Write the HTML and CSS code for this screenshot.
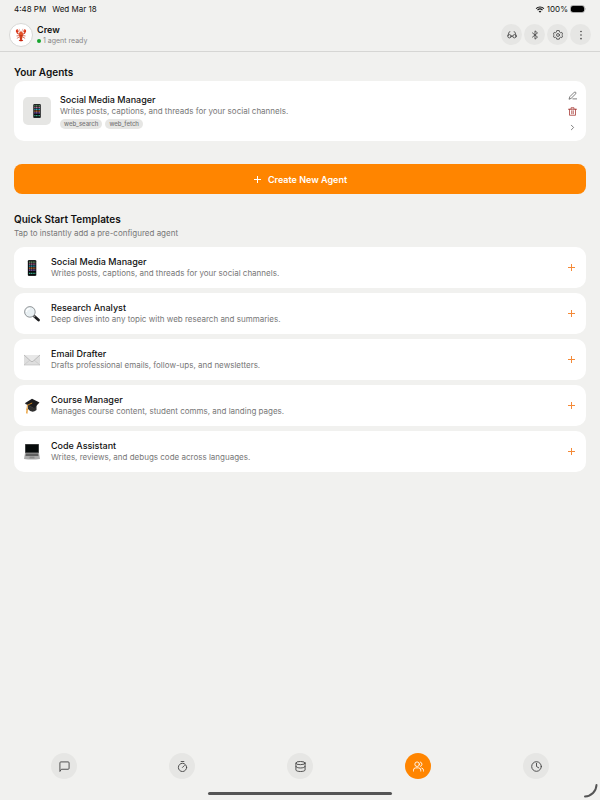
FILE: index.html
```html
<!DOCTYPE html>
<html lang="en">
<head>
<meta charset="utf-8">
<meta name="viewport" content="width=device-width, initial-scale=1">
<title>Crew</title>
<link rel="stylesheet" href="styles.css">
</head>
<body>
<svg class="defs" aria-hidden="true">
  <symbol id="plus" viewBox="0 0 9 9"><path d="M4.5 1v7M1 4.5h7"/></symbol>
  <symbol id="phone" viewBox="0 0 16 16">
    <rect x="3.7" y="0" width="8.8" height="16" rx="1.2" fill="#777"/>
    <rect x="4" y=".2" width="8" height="15.6" rx="1" fill="#080b0d"/>
    <g stroke-width="1.3" stroke-dasharray="1.3 .5">
      <path d="M4.9 2.2h6.5" stroke="#74a474"/><path d="M4.9 4.2h6.5" stroke="#bd6d9b"/>
      <path d="M4.9 6.2h6.5" stroke="#2ca5c0"/><path d="M4.9 8.2h6.5" stroke="#d47b38"/>
      <path d="M4.9 10.2h6.5" stroke="#8e60c4"/><path d="M4.9 13.3h6.5" stroke="#38a685"/>
    </g>
  </symbol>
</svg>
<div class="app">
  <div class="status">
    <div class="status-group"><span>4:48 PM</span><span>Wed Mar 18</span></div>
    <div class="status-end">
      <svg class="wifi" viewBox="0 0 12 9"><path d="M1 3.3a7.3 7.3 0 0 1 10 0M2.8 5.2a4.6 4.6 0 0 1 6.4 0" fill="none" stroke="#111" stroke-width="1.5"/><path d="M6 8.8 4.2 6.9a2.6 2.6 0 0 1 3.6 0z" fill="#111"/></svg>
      <span>100%</span>
      <svg class="battery" viewBox="0 0 16 8"><rect x=".5" y=".5" width="14" height="7" rx="2.4" fill="none" stroke="#aaa"/><rect x="1" y="1" width="13" height="6" rx="1.8" fill="#000"/><path d="M15.3 2.8q1 1.2 0 2.4z" fill="#999"/></svg>
    </div>
  </div>
  <header class="header">
    <div class="avatar">
      <svg viewBox="0 0 24 24"><g fill="none" stroke="#c92d13" stroke-width="1.7" stroke-linecap="round"><path d="M9.5 11 5.4 9V6M14.5 11l4.1-2V6"/><path d="m9 13-4 .5M15 13l4 .5M9 15.5l-3.5 2M15 15.5l3.5 2" stroke-width="1.1"/><path d="M10.7 7 9 2M13.3 7 15 2" stroke-width=".6"/></g><path d="M6.6 1.5C3 2.3 2 5 4.4 7.7L7 7.9C8.5 5.5 8 4 6.7 3.4L6 5.5zM17.4 1.5C21 2.3 22 5 19.6 7.7L17 7.9C15.5 5.5 16 4 17.3 3.4L18 5.5z" fill="#dc3517"/><path d="M12 6c3 0 4 3 3.3 6.500L13.8 19h-3.600l-1.500-6.500C8 9 9 6 12 6z" fill="#e5532a"/><path d="M9.5 13h5M9.9 15.3h4.200M10.3 17.500h3.400" stroke="#a6210c"/><path d="m12 18 4 4-2.700.8h-2.600L8 22z" fill="#c9250e"/></svg>
    </div>
    <div class="identity">
      <h1>Crew</h1>
      <p class="ready"><span class="dot"></span>1 agent ready</p>
    </div>
    <div class="actions">
      <button class="round" aria-label="Preview"><svg class="line" viewBox="0 0 24 24"><circle cx="6" cy="15" r="4"/><circle cx="18" cy="15" r="4"/><path d="M10 15q2-3 4 0M2 14l3-9q.5-1 2-1M22 14l-3-9q-.5-1-2-1"/></svg></button>
      <button class="round" aria-label="Bluetooth"><svg class="line" viewBox="0 0 24 24"><path d="m6 7 12 10-6 5V2l6 5L6 17"/></svg></button>
      <button class="round" aria-label="Settings"><svg class="line" viewBox="0 0 24 24"><path d="m9 2-.7 3-2.5 1.500L3 5.600.8 10 3 12 .8 14 3 18.400l2.800-.9L8.300 19 9 22h6l.7-3 2.500-1.500 2.800.9 2.200-4.400-2.200-2 2.200-2L21 5.600l-2.800.9L15.700 5 15 2z"/><circle cx="12" cy="12" r="3.5"/></svg></button>
      <button class="round" aria-label="More"><svg class="solid" viewBox="0 0 24 24"><circle cx="12" cy="3.5" r="2"/><circle cx="12" cy="12" r="2"/><circle cx="12" cy="20.5" r="2"/></svg></button>
    </div>
  </header>
  <main class="content">
    <section>
      <h2>Your Agents</h2>
      <article class="agent">
        <div class="tile"><svg class="phone-small"><use href="#phone"/></svg></div>
        <div class="copy">
          <h3>Social Media Manager</h3>
          <p>Writes posts, captions, and threads for your social channels.</p>
          <div class="tags"><span>web_search</span><span>web_fetch</span></div>
        </div>
        <div class="tools">
          <button aria-label="Edit"><svg class="line" viewBox="0 0 24 24"><path d="m3 21 2-6L17 3q2-1 3.500.5T21 7L9 19zM13 21h10"/></svg></button>
          <button class="danger" aria-label="Delete"><svg class="line" viewBox="0 0 24 24"><path d="M1 6h22M4 6v16h16V6M8 6V2h8v4M10 10v8M14 10v8"/></svg></button>
          <button aria-label="Open"><svg class="line" viewBox="0 0 24 24"><path d="m9 6 6 6-6 6"/></svg></button>
        </div>
      </article>
    </section>
    <button class="create"><svg class="plus"><use href="#plus"/></svg>Create New Agent</button>
    <section>
      <h2>Quick Start Templates</h2>
      <p class="hint">Tap to instantly add a pre-configured agent</p>
      <div class="templates">
        <button class="template">
          <svg class="emoji"><use href="#phone"/></svg>
          <span class="copy"><strong>Social Media Manager</strong><span>Writes posts, captions, and threads for your social channels.</span></span>
          <svg class="plus"><use href="#plus"/></svg>
        </button>
        <button class="template">
          <svg class="emoji" viewBox="0 0 16 16"><path d="m10 10 4.500 4" stroke="#1c1c1e" stroke-width="2.7" stroke-linecap="round"/><path d="m9.500 9.500 1.500 1.500" stroke="#888" stroke-width="1.5"/><circle cx="5.9" cy="5.9" r="5.3" fill="#e9f0f3" stroke="#85898c" stroke-width=".9"/><path d="M2.500 6a3.500 3.500 0 0 1 3.400-3.400" fill="none" stroke="#fff" stroke-width="1.2"/></svg>
          <span class="copy"><strong>Research Analyst</strong><span>Deep dives into any topic with web research and summaries.</span></span>
          <svg class="plus"><use href="#plus"/></svg>
        </button>
        <button class="template">
          <svg class="emoji" viewBox="0 0 16 16"><path d="M0 3h16v10H0z" fill="#dedede"/><path d="m0 13 6-5M16 13l-6-5" stroke="#c3c3c3" stroke-width=".6"/><path d="m0 3 7 6.300q1 .8 2 0L16 3" fill="#e8e8e8" stroke="#aaa" stroke-width=".7"/><path d="M0 13h16" stroke="#bbb" stroke-width=".6"/></svg>
          <span class="copy"><strong>Email Drafter</strong><span>Drafts professional emails, follow-ups, and newsletters.</span></span>
          <svg class="plus"><use href="#plus"/></svg>
        </button>
        <button class="template">
          <svg class="emoji" viewBox="0 0 16 16"><path d="M4 6v5q4 5 8.500 1V5z" fill="#303030"/><path d="M.8 5.300 8 .7l7.500 3.800-5.700 6z" fill="#1b1b1d"/><path d="M1 5.400 9.800 10.300" stroke="#555" stroke-width=".5"/><path d="M8.200 5 3.400 7.200 3 12" fill="none" stroke="#d98b21" stroke-width=".9"/><path d="m2.600 10.500 1.200.2-.4 5-1.200-.4z" fill="#e69320"/></svg>
          <span class="copy"><strong>Course Manager</strong><span>Manages course content, student comms, and landing pages.</span></span>
          <svg class="plus"><use href="#plus"/></svg>
        </button>
        <button class="template">
          <svg class="emoji" viewBox="0 0 16 16"><path d="M1 0h14v9H1z" fill="#686868"/><path d="M1.600.5h12.800v7.900H1.600z" fill="#070b0b"/><path d="M1 9h14l1 6q-8 1-16 0z" fill="#aaa"/><path d="M2 9.500h12l.5 2.500h-13z" fill="#606060"/><path d="M5.700 12.500h4.600l.3 1.900H5.400z" fill="#8b8b8b"/></svg>
          <span class="copy"><strong>Code Assistant</strong><span>Writes, reviews, and debugs code across languages.</span></span>
          <svg class="plus"><use href="#plus"/></svg>
        </button>
      </div>
    </section>
  </main>
  <nav class="tabs" aria-label="Main">
    <button aria-label="Chat"><svg class="line" viewBox="0 0 24 24"><path d="M2 22V4q0-2 2-2h16q2 0 2 2v12q0 2-2 2H6z"/></svg></button>
    <button aria-label="Timers"><svg class="line" viewBox="0 0 24 24"><circle cx="12" cy="14" r="9"/><path d="M9 1h6M12 14l4-4"/></svg></button>
    <button aria-label="Data"><svg class="line" viewBox="0 0 24 24"><ellipse cx="12" cy="4.5" rx="10" ry="3.5"/><path d="M2 4.500v15c0 4.600 20 4.600 20 0v-15M2 12c0 4.600 20 4.600 20 0"/></svg></button>
    <button class="active" aria-label="Crew"><svg class="line" viewBox="0 0 24 24"><circle cx="9" cy="7" r="5"/><path d="M1 22v-2q0-5 5-5h6q5 0 5 5v2M16 2.200a5 5 0 0 1 0 9.600M19 15.300q4 1 4 5V22"/></svg></button>
    <button aria-label="History"><svg class="line" viewBox="0 0 24 24"><circle cx="12" cy="12" r="10.5"/><path d="M12 5v7l5 3"/></svg></button>
  </nav>
  <div class="home"></div>
  <svg class="corner" viewBox="0 0 14 14"><path d="M12.500 1A12 12 0 0 1 1 12.500"/></svg>
</div>
</body>
</html>
```
FILE: styles.css
```css
* { box-sizing: border-box; }
body { margin: 0; background: #f1f1ef; color: #111; font-family: Inter, "Liberation Sans", sans-serif; }
h1, h2, h3, p { margin: 0; }
button { border: 0; padding: 0; margin: 0; background: none; color: inherit; font: inherit; cursor: pointer; }
svg { display: block; flex: none; }
.defs { position: absolute; width: 0; height: 0; }
.app { position: relative; display: flex; flex-direction: column; min-height: 100vh; }
.status { display: flex; justify-content: space-between; align-items: center; height: 18px; padding: 0 14px; font-size: 8px; line-height: 10px; }
.status-group { display: flex; gap: 6px; }
.status-end { display: flex; align-items: center; gap: 2px; }
.wifi { width: 10px; height: 7px; }
.battery { width: 16px; height: 8px; }
.header { display: flex; align-items: center; gap: 4px; height: 34px; padding: 0 9px; border-bottom: 1px solid #d6d6d4; }
.avatar { display: grid; place-items: center; width: 24px; height: 24px; border: 1px solid #d8d8d6; border-radius: 50%; background: #fff; }
.avatar svg { width: 14px; height: 14px; }
.identity { flex: 1; }
h1 { font-size: 9px; font-weight: 600; line-height: 12px; }
.ready { display: flex; align-items: center; gap: 2px; color: #888; font-size: 7px; line-height: 10px; }
.dot { width: 4px; height: 4px; border-radius: 50%; background: #16a52c; }
.actions { display: flex; gap: 2px; }
.round { display: grid; place-items: center; width: 21px; height: 21px; border-radius: 50%; background: #e6e6e4; color: #444; }
.round svg { width: 10px; height: 10px; }
.line { fill: none; stroke: currentColor; stroke-width: 2; stroke-linecap: round; stroke-linejoin: round; }
.solid { fill: currentColor; }
.content { flex: 1; padding: 13px 14px; }
h2 { font-size: 10px; font-weight: 600; line-height: 14px; }
.agent { display: flex; align-items: center; gap: 9px; margin-top: 2px; padding: 8px 9px; border-radius: 10px; background: #fff; }
.tile { display: grid; place-items: center; width: 28px; height: 28px; border-radius: 5px; background: #e6e6e4; }
.phone-small { width: 14px; height: 14px; }
.copy { flex: 1; min-width: 0; text-align: left; }
h3, .copy strong { display: block; font-size: 9px; font-weight: 500; line-height: 12px; }
.copy p, .copy > span { display: block; color: #777; font-size: 8px; line-height: 11px; }
.tags { display: flex; gap: 3px; margin-top: 2px; }
.tags span { padding: 0 4px; border-radius: 5px; background: #e6e6e4; color: #777; font-size: 6px; font-weight: 500; line-height: 10px; }
.tools { display: flex; flex-direction: column; gap: 4px; color: #555; }
.tools button { display: grid; place-items: center; width: 10px; height: 12px; }
.tools svg { width: 9px; height: 9px; }
.tools .danger { color: #a3302c; }
.create { display: flex; justify-content: center; align-items: center; gap: 6px; width: 100%; height: 30px; margin: 23px 0 18px; border-radius: 8px; background: #ff8500; color: #fff; font-size: 9px; font-weight: 600; }
.plus { width: 9px; height: 9px; fill: none; stroke: currentColor; stroke-width: 1; }
.hint { margin-top: 1px; color: #777; font-size: 8px; line-height: 13px; }
.templates { display: flex; flex-direction: column; gap: 5px; margin-top: 7px; }
.template { display: flex; align-items: center; gap: 11px; width: 100%; height: 41px; padding: 0 10px; border-radius: 10px; background: #fff; }
.template .plus { color: #f48a38; }
.emoji { width: 16px; height: 16px; }
.tabs { display: flex; justify-content: space-around; padding: 0 5px; }
.tabs button { display: grid; place-items: center; width: 26px; height: 26px; border-radius: 50%; background: #e6e6e4; color: #444; }
.tabs svg { width: 11px; height: 11px; }
.tabs .active { background: #ff8500; color: #fff; }
.home { width: 184px; height: 3px; margin: 13px auto 5px; border-radius: 2px; background: #555; }
.corner { position: absolute; right: 2px; bottom: 2px; width: 14px; height: 14px; fill: none; stroke: #555; stroke-width: 2; stroke-linecap: round; }
```
